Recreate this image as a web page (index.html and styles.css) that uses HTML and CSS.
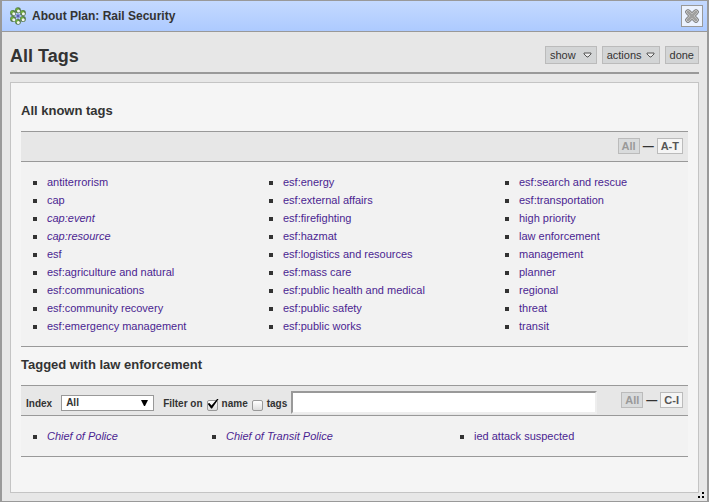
FILE: index.html
```html
<!DOCTYPE html>
<html lang="en">
<head>
<meta charset="utf-8">
<title>About Plan: Rail Security</title>
<link rel="stylesheet" href="styles.css">
</head>
<body>
<div class="dialog">
  <header class="titlebar">
    <svg class="logo" width="18" height="18" viewBox="0 0 18 18" aria-hidden="true">
      <g stroke="#8298b0" stroke-width="1.2">
        <path d="M9 3v12M4 6l10 6M14 6L4 12"/>
      </g>
      <g fill="#56794c">
        <circle cx="9" cy="3.2" r="2.9"/><circle cx="14" cy="6" r="2.9"/><circle cx="14" cy="12" r="2.9"/>
        <circle cx="9" cy="14.8" r="2.9"/><circle cx="4" cy="12" r="2.9"/><circle cx="4" cy="6" r="2.9"/>
      </g>
      <g fill="#6fae3c">
        <circle cx="8.2" cy="2.6" r="1.6"/><circle cx="13.4" cy="5.2" r="1.6"/><circle cx="13.2" cy="11.4" r="1.6"/>
        <circle cx="8.2" cy="14.2" r="1.6"/><circle cx="3.2" cy="11.4" r="1.6"/><circle cx="3.2" cy="5.2" r="1.6"/>
      </g>
      <g fill="#f2f6ee">
        <circle cx="9.5" cy="3.9" r="1.5"/><circle cx="14.4" cy="6.8" r="1.5"/><circle cx="14.2" cy="12.8" r="1.5"/>
        <circle cx="9.3" cy="15.4" r="1.5"/><circle cx="4.8" cy="12.8" r="1.5"/><circle cx="4.8" cy="6.8" r="1.5"/>
      </g>
      <circle cx="9" cy="9" r="2" fill="#8a8fd8"/>
      <circle cx="9" cy="9" r="1" fill="#4a50a8"/>
    </svg>
    <span class="title">About Plan: Rail Security</span>
    <button class="close" type="button" aria-label="Close">
      <svg width="16" height="16" viewBox="0 0 16 16" aria-hidden="true">
        <path d="M4 4l8 8M12 4l-8 8" stroke="#666" stroke-width="5.4" stroke-linecap="round"/>
        <path d="M4 4l8 8M12 4l-8 8" stroke="#d6d6d6" stroke-width="4" stroke-linecap="round"/>
        <path d="M4 4l8 8M12 4l-8 8" stroke="#a0a0a0" stroke-width="2.8" stroke-linecap="round"/>
      </svg>
    </button>
  </header>
  <main class="content">
    <div class="heading">
      <h1>All Tags</h1>
      <div class="menu">
        <button class="menu-show" type="button">show
          <svg width="9" height="6" viewBox="0 0 9 6" aria-hidden="true"><path d="M1 1h7v1L5 5H4L1 2z" fill="#eee" stroke="#555"/></svg>
        </button>
        <button type="button">actions
          <svg width="9" height="6" viewBox="0 0 9 6" aria-hidden="true"><path d="M1 1h7v1L5 5H4L1 2z" fill="#eee" stroke="#555"/></svg>
        </button>
        <button type="button">done</button>
      </div>
    </div>
    <div class="panel">
      <section>
        <h2>All known tags</h2>
        <div class="band">
          <nav class="pager"><button type="button" disabled>All</button><span>—</span><button type="button">A-T</button></nav>
        </div>
        <div class="tags known">
          <ul>
            <li><a href="#">antiterrorism</a></li>
            <li><a href="#">cap</a></li>
            <li><a class="generic" href="#">cap:event</a></li>
            <li><a class="generic" href="#">cap:resource</a></li>
            <li><a href="#">esf</a></li>
            <li><a href="#">esf:agriculture and natural</a></li>
            <li><a href="#">esf:communications</a></li>
            <li><a href="#">esf:community recovery</a></li>
            <li><a href="#">esf:emergency management</a></li>
          </ul>
          <ul>
            <li><a href="#">esf:energy</a></li>
            <li><a href="#">esf:external affairs</a></li>
            <li><a href="#">esf:firefighting</a></li>
            <li><a href="#">esf:hazmat</a></li>
            <li><a href="#">esf:logistics and resources</a></li>
            <li><a href="#">esf:mass care</a></li>
            <li><a href="#">esf:public health and medical</a></li>
            <li><a href="#">esf:public safety</a></li>
            <li><a href="#">esf:public works</a></li>
          </ul>
          <ul>
            <li><a href="#">esf:search and rescue</a></li>
            <li><a href="#">esf:transportation</a></li>
            <li><a href="#">high priority</a></li>
            <li><a href="#">law enforcement</a></li>
            <li><a href="#">management</a></li>
            <li><a href="#">planner</a></li>
            <li><a href="#">regional</a></li>
            <li><a href="#">threat</a></li>
            <li><a href="#">transit</a></li>
          </ul>
        </div>
      </section>
      <section>
        <h2>Tagged with law enforcement</h2>
        <div class="band">
          <div class="filters">
            <label for="index">Index</label>
            <span class="select">
              <select id="index"><option>All</option></select>
              <svg width="7" height="6" viewBox="0 0 7 6" aria-hidden="true"><path d="M0 0h7L4 6H3z"/></svg>
            </span>
            <span class="caption">Filter on</span>
            <input id="by-name" type="checkbox" checked>
            <label for="by-name">name</label>
            <input id="by-tags" type="checkbox">
            <label for="by-tags">tags</label>
            <input class="query" type="text" aria-label="Filter text">
          </div>
          <nav class="pager"><button type="button" disabled>All</button><span>—</span><button type="button">C-I</button></nav>
        </div>
        <div class="tags tagged">
          <ul><li><a class="generic" href="#">Chief of Police</a></li></ul>
          <ul><li><a class="generic" href="#">Chief of Transit Police</a></li></ul>
          <ul><li><a href="#">ied attack suspected</a></li></ul>
        </div>
      </section>
    </div>
  </main>
  <svg class="grip" width="6" height="6" viewBox="0 0 6 6" shape-rendering="crispEdges" aria-hidden="true"><path d="M4 0h2v2H4zM0 4h2v2H0zM4 4h2v2H4z"/></svg>
</div>
</body>
</html>
```
FILE: styles.css
```css
* {
  box-sizing: border-box;
}

body {
  margin: 0;
  color: #333;
  font: 11px/18px "Liberation Sans", Arial, sans-serif;
}

button,
input,
select {
  margin: 0;
  color: inherit;
  font: inherit;
}

h1,
h2,
ul {
  margin: 0;
  padding: 0;
}

.dialog {
  position: relative;
  display: flex;
  flex-direction: column;
  min-height: 100vh;
  border: solid #999;
  border-width: 1px 2px;
  background: #e7e7e7;
}

.titlebar {
  display: flex;
  align-items: center;
  height: 31px;
  padding: 0 4px 0 7px;
  border-bottom: 1px solid #999;
  background: linear-gradient(#c4d9ff, #adcaff);
}

.title {
  flex: 1;
  margin-left: 5px;
  font-size: 12px;
  font-weight: bold;
}

.close {
  display: flex;
  align-items: center;
  justify-content: center;
  width: 22px;
  height: 22px;
  padding: 0;
  border: 1px solid #999;
  background: #ebf2ff;
}

.content {
  display: flex;
  flex: 1;
  flex-direction: column;
  padding: 0 8px 8px;
}

.heading {
  display: flex;
  align-items: center;
  justify-content: space-between;
  height: 42px;
  padding-top: 6px;
  border-bottom: 2px solid #999;
}

h1 {
  padding-top: 2px;
  font-size: 18px;
  line-height: 20px;
}

h2 {
  margin: 9px 0 11px;
  font-size: 13px;
  line-height: 18px;
}

.menu {
  display: flex;
  gap: 5px;
}

.menu button {
  display: flex;
  align-items: center;
  gap: 4px;
  height: 18px;
  padding: 0 4px;
  border: 1px solid #bbb;
  background: #d3d5d6;
}

.menu .menu-show {
  gap: 7px;
}

.panel {
  flex: 1;
  margin-top: 8px;
  padding: 10px;
  border: 1px solid #c4c4c4;
  background: #f5f5f5;
}

.panel section {
  display: flow-root;
}

.band {
  display: flex;
  align-items: center;
  height: 31px;
  padding: 0 5px;
  border: solid #999;
  border-width: 1px 0;
  background: #e7e7e7;
}

.pager {
  display: flex;
  align-items: center;
  gap: 3px;
  margin-left: auto;
  padding-bottom: 2px;
  font-weight: bold;
}

.pager button {
  height: 16px;
  padding: 0 3px;
  border: 1px solid #bbb;
  background: #f5f5f5;
  color: #555;
  line-height: 14px;
}

.pager button:disabled {
  background: #d9dbdc;
  color: #999;
}

.tags {
  display: grid;
  padding: 11px 0;
  border-bottom: 1px solid #999;
  background: #f2f2f2;
}

.known {
  grid-template-columns: 236fr 236fr 195fr;
}

.tagged {
  grid-template-columns: 179fr 248fr 240fr;
}

.tags ul {
  list-style: none;
}

.tags li {
  display: flex;
  align-items: center;
  gap: 10px;
  padding-left: 12px;
}

.tags li::before {
  width: 4px;
  height: 4px;
  margin-top: 2px;
  background: #333;
  content: "";
}

.tags a {
  color: #4b1f91;
  text-decoration: none;
}

.tags .generic {
  font-style: italic;
}

.filters {
  display: flex;
  flex: 1;
  align-items: center;
  gap: 4px;
  padding-top: 4px;
  margin-right: 24px;
  font-size: 10px;
  font-weight: bold;
}

.filters label,
.caption {
  padding-top: 2px;
}

.select {
  position: relative;
  margin: 0 5px;
}

.select select {
  display: block;
  width: 93px;
  height: 16px;
  padding: 0 4px;
  border: 1px solid #999;
  border-radius: 0;
  appearance: none;
  background: #fff;
  line-height: 14px;
}

.select svg {
  position: absolute;
  top: 5px;
  right: 6px;
  pointer-events: none;
}

.filters input[type="checkbox"] {
  position: relative;
  width: 11px;
  height: 11px;
  margin-top: 5px;
  border: 1px solid #999;
  border-radius: 2px;
  appearance: none;
  background: linear-gradient(#fff, #ddd);
}

.filters input[type="checkbox"]:checked::after {
  position: absolute;
  top: -2px;
  left: 0;
  width: 11px;
  height: 10px;
  background: #000;
  clip-path: polygon(0 52%, 16% 46%, 36% 70%, 90% 0, 100% 4%, 40% 100%, 32% 100%);
  content: "";
}

.filters .query {
  flex: 1;
  min-width: 0;
  height: 23px;
  padding: 0 4px;
  border: 2px solid;
  border-color: #999 #eee #eee #999;
  background: #fff;
}

.grip {
  position: absolute;
  right: 3px;
  bottom: 3px;
}
```
